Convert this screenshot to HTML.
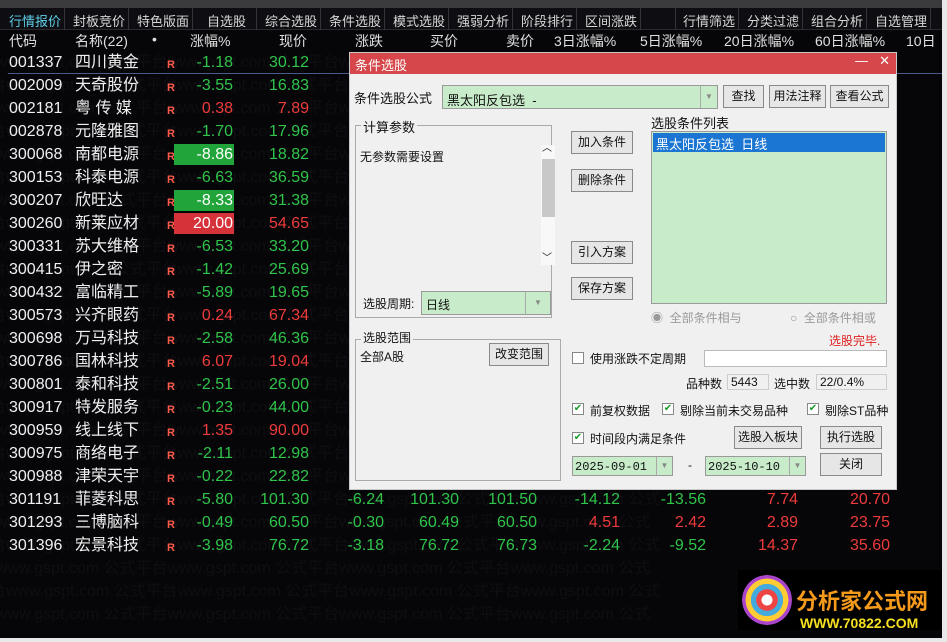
<!DOCTYPE html><html><head><meta charset="utf-8"><style>
*{margin:0;padding:0;box-sizing:border-box}
html{width:947px;height:642px;overflow:hidden}
body{width:947px;height:642px;background:#060609;overflow:hidden;position:relative;font-family:"Liberation Sans","Noto Sans CJK SC",sans-serif;color:#e8e8e8}
.a{position:absolute;white-space:nowrap}
.top{left:0;top:0;width:947px;height:8px;background:#3b3b3d}
.tabs{left:0;top:8px;width:942px;height:22px;background:#0d0d12;border-bottom:1px solid #2a2a30}
.tab{position:absolute;top:3px;font-size:13px;color:#d8d8d8}
.sep{position:absolute;top:0;width:1px;height:22px;background:#33333a}
.hd{font-size:14px;color:#e0e0e0;top:31px}
.row{font-size:16px;line-height:22px;height:22px}
.g{color:#2fc44a}.r{color:#ee3b3b}.w{color:#f0f0f0}
.R{font-size:11px;color:#ff5a4a;font-weight:bold}
.wm{color:#0f0f13;font-size:16px;left:0}
.dlg{left:349px;top:52px;width:548px;height:438px;background:#f0f0f0;border:1px solid #c9c9c9}
.tt{left:0;top:0;width:546px;height:21px;background:#d5474a;color:#fff;font-size:13px;padding:2px 5px}
.btn{position:absolute;background:#e6e6e6;border:1px solid #8a8a8a;font-size:12px;color:#111;text-align:center;line-height:20px;height:23px}
.t{position:absolute;font-size:12px;color:#111;white-space:nowrap}
.grn{position:absolute;background:#c8ecca;border:1px solid #9a9a9a}
.cb{position:absolute;width:12px;height:12px;border:1px solid #888;background:#fff;font-size:10px;color:#1a9a2a;line-height:10px;text-align:center}
.dd{position:absolute;right:0;top:0;bottom:0;width:17px;border-left:1px solid #aaa;color:#888;font-size:8px;text-align:center}
</style></head><body>
<div class="a top"></div>
<div class="a tabs">
<span class="tab" style="left:9px;color:#5fd0e8">行情报价</span><div class="sep" style="left:64px"></div>
<span class="tab" style="left:73px">封板竞价</span><div class="sep" style="left:128px"></div>
<span class="tab" style="left:137px">特色版面</span><div class="sep" style="left:192px"></div>
<span class="tab" style="left:207px">自选股</span><div class="sep" style="left:256px"></div>
<span class="tab" style="left:265px">综合选股</span><div class="sep" style="left:320px"></div>
<span class="tab" style="left:329px">条件选股</span><div class="sep" style="left:384px"></div>
<span class="tab" style="left:393px">模式选股</span><div class="sep" style="left:448px"></div>
<span class="tab" style="left:457px">强弱分析</span><div class="sep" style="left:512px"></div>
<span class="tab" style="left:521px">阶段排行</span><div class="sep" style="left:576px"></div>
<span class="tab" style="left:585px">区间涨跌</span><div class="sep" style="left:640px"></div><div class="sep" style="left:675px"></div>
<span class="tab" style="left:683px">行情筛选</span><div class="sep" style="left:738px"></div>
<span class="tab" style="left:747px">分类过滤</span><div class="sep" style="left:802px"></div>
<span class="tab" style="left:811px">组合分析</span><div class="sep" style="left:866px"></div>
<span class="tab" style="left:875px">自选管理</span><div class="sep" style="left:930px"></div>
</div>
<div class="a" style="left:942px;top:0;width:5px;height:642px;background:#e8e8e8"></div>
<div class="a hd" style="left:9px">代码</div><div class="a hd" style="left:75px">名称(22)</div><div class="a hd" style="left:152px">•</div>
<div class="a hd" style="left:190px">涨幅%</div><div class="a hd" style="left:279px">现价</div><div class="a hd" style="left:355px">涨跌</div>
<div class="a hd" style="left:430px">买价</div><div class="a hd" style="left:506px">卖价</div><div class="a hd" style="left:554px">3日涨幅%</div>
<div class="a hd" style="left:640px">5日涨幅%</div><div class="a hd" style="left:724px">20日涨幅%</div><div class="a hd" style="left:815px">60日涨幅%</div><div class="a hd" style="left:906px">10日</div>
<div class="a" style="left:8px;top:73px;width:934px;height:1px;background:#4a5a8a"></div>
<div id="wm"></div>
<div id="rows"></div>
<div class="a dlg">
<div class="a tt">条件选股<span style="position:absolute;right:28px;top:0">—</span><span style="position:absolute;right:6px;top:0">✕</span></div>
<div class="t" style="left:4px;top:35px;font-size:13px">条件选股公式</div>
<div class="grn" style="left:92px;top:32px;width:276px;height:24px"><span class="t" style="left:4px;top:4px;font-size:13px">黑太阳反包选 &nbsp;-</span><div class="dd" style="line-height:22px">▼</div></div>
<div class="btn" style="left:373px;top:32px;width:41px">查找</div>
<div class="btn" style="left:419px;top:32px;width:57px">用法注释</div>
<div class="btn" style="left:480px;top:32px;width:59px">查看公式</div>
<div class="a" style="left:5px;top:72px;width:197px;height:193px;border:1px solid #aaa"></div>
<div class="t" style="left:11px;top:64px;background:#f0f0f0;padding:0 2px;font-size:13px">计算参数</div>
<div class="t" style="left:10px;top:95px">无参数需要设置</div>
<div class="a" style="left:191px;top:92px;width:14px;height:120px;background:#f8f8f8"></div>
<div class="a" style="left:192px;top:106px;width:13px;height:58px;background:#c8c8c8"></div>
<div class="t" style="left:192px;top:86px;font-size:10px">︿</div><div class="t" style="left:192px;top:196px;font-size:10px">﹀</div>
<div class="t" style="left:13px;top:242px">选股周期:</div>
<div class="grn" style="left:71px;top:238px;width:130px;height:24px;background:#c8ecca"><span class="t" style="left:4px;top:4px">日线</span><div class="dd" style="line-height:22px;width:25px">▼</div></div>
<div class="btn" style="left:221px;top:78px;width:62px">加入条件</div>
<div class="btn" style="left:221px;top:116px;width:62px">删除条件</div>
<div class="btn" style="left:221px;top:188px;width:62px">引入方案</div>
<div class="btn" style="left:221px;top:224px;width:62px">保存方案</div>
<div class="t" style="left:301px;top:60px;font-size:13px">选股条件列表</div>
<div class="grn" style="left:301px;top:78px;width:236px;height:173px"><div class="a" style="left:1px;top:1px;width:232px;height:19px;background:#1a76d2;color:#fff;font-size:13px;padding:1px 3px">黑太阳反包选 &nbsp;日线</div></div>
<div class="t" style="left:301px;top:256px;color:#999">◉ &nbsp;全部条件相与</div>
<div class="t" style="left:440px;top:256px;color:#999">○ &nbsp;全部条件相或</div>
<div class="a" style="left:5px;top:286px;width:206px;height:142px;border:1px solid #aaa"></div>
<div class="t" style="left:11px;top:276px;background:#f0f0f0;padding:0 2px">选股范围</div>
<div class="t" style="left:10px;top:295px">全部A股</div>
<div class="btn" style="left:139px;top:290px;width:60px">改变范围</div>
<div class="t" style="left:479px;top:279px;color:#e02020">选股完毕.</div>
<div class="cb" style="left:222px;top:299px"></div><div class="t" style="left:240px;top:297px">使用涨跌不定周期</div>
<div class="a" style="left:354px;top:297px;width:183px;height:17px;background:#fff;border:1px solid #bbb"></div>
<div class="t" style="left:336px;top:322px">品种数</div><div class="a" style="left:377px;top:321px;width:42px;height:16px;border:1px solid #ccc;font-size:12px;padding-left:3px;color:#111">5443</div>
<div class="t" style="left:424px;top:322px">选中数</div><div class="a" style="left:466px;top:321px;width:71px;height:16px;border:1px solid #ccc;font-size:12px;padding-left:3px;color:#111">22/0.4%</div>
<div class="cb" style="left:222px;top:350px">✔</div><div class="t" style="left:240px;top:349px">前复权数据</div>
<div class="cb" style="left:312px;top:350px">✔</div><div class="t" style="left:330px;top:349px">剔除当前未交易品种</div>
<div class="cb" style="left:457px;top:350px">✔</div><div class="t" style="left:475px;top:349px">剔除ST品种</div>
<div class="cb" style="left:222px;top:379px">✔</div><div class="t" style="left:240px;top:377px">时间段内满足条件</div>
<div class="btn" style="left:384px;top:373px;width:68px">选股入板块</div>
<div class="btn" style="left:470px;top:373px;width:62px">执行选股</div>
<div class="grn" style="left:222px;top:403px;width:101px;height:20px"><span class="t" style="left:2px;top:3px;font-family:'Liberation Mono',monospace">2025-09-01</span><div class="dd" style="line-height:18px;width:16px">▼</div></div>
<div class="t" style="left:338px;top:405px">-</div>
<div class="grn" style="left:355px;top:403px;width:101px;height:20px"><span class="t" style="left:2px;top:3px;font-family:'Liberation Mono',monospace">2025-10-10</span><div class="dd" style="line-height:18px;width:16px">▼</div></div>
<div class="btn" style="left:470px;top:400px;width:62px">关闭</div>
</div>
<div class="a" style="left:738px;top:570px;width:204px;height:60px;background:#000"></div>
<div class="a" style="left:742px;top:575px;width:50px;height:50px;border-radius:50%;background:radial-gradient(circle,#fff 0 15%,#e44 16% 30%,#4ad 31% 45%,#fc3 46% 60%,#a4c 61% 70%,transparent 71%)"></div>
<div class="a" style="left:796px;top:584px;font-size:22px;font-weight:bold;color:#f59a1a">分析家公式网</div>
<div class="a" style="left:800px;top:615px;font-size:14px;font-weight:bold;color:#f5e020">WWW.70822.COM</div>
<div class="a" style="left:0;top:638px;width:947px;height:4px;background:#e8e8e8"></div>
<script>
var D=[["001337","四川黄金",-1.18,"30.12"],["002009","天奇股份",-3.55,"16.83"],["002181","粤 传 媒",0.38,"7.89"],["002878","元隆雅图",-1.70,"17.96"],["300068","南都电源",-8.86,"18.82"],["300153","科泰电源",-6.63,"36.59"],["300207","欣旺达",-8.33,"31.38"],["300260","新莱应材",20.00,"54.65"],["300331","苏大维格",-6.53,"33.20"],["300415","伊之密",-1.42,"25.69"],["300432","富临精工",-5.89,"19.65"],["300573","兴齐眼药",0.24,"67.34"],["300698","万马科技",-2.58,"46.36"],["300786","国林科技",6.07,"19.04"],["300801","泰和科技",-2.51,"26.00"],["300917","特发服务",-0.23,"44.00"],["300959","线上线下",1.35,"90.00"],["300975","商络电子",-2.11,"12.98"],["300988","津荣天宇",-0.22,"22.82"],["301191","菲菱科思",-5.80,"101.30"],["301293","三博脑科",-0.49,"60.50"],["301396","宏景科技",-3.98,"76.72"]];
var X=[["-6.24","101.30","101.50","-14.12","-13.56","7.74","20.70"],["-0.30","60.49","60.50","4.51","2.42","2.89","23.75"],["-3.18","76.72","76.73","-2.24","-9.52","14.37","35.60"]];
var h="",w="";
for(var k=0;k<25;k++){w+='<div class="a wm" style="top:'+(48+k*23)+'px;left:'+(-20+(k%2)*10)+'px">'+'台www.gspt.com 公式平台www.gspt.com 公式平台www.gspt.com 公式平台www.gspt.com 公式'+'</div>';}
document.getElementById('wm').innerHTML=w;
D.forEach(function(d,i){var y=52+i*23;var c=d[2]<0?"g":"r";var v=d[2].toFixed(2);
h+='<div class="a row w" style="left:9px;top:'+y+'px">'+d[0]+'</div><div class="a row w" style="left:75px;top:'+y+'px">'+d[1]+'</div><div class="a R" style="left:167px;top:'+(y+7)+'px">R</div>';
var bg="";if(i==4||i==6)bg="background:#21a53b;color:#fff;";if(i==7)bg="background:#d6323a;color:#fff;";
h+='<div class="a row '+c+'" style="'+bg+'left:174px;width:60px;text-align:right;padding-right:1px;top:'+y+'px;height:21px">'+v+'</div>';
h+='<div class="a row '+c+'" style="left:250px;width:59px;text-align:right;top:'+y+'px">'+d[3]+'</div>';
if(i>=19){var e=X[i-19],R=[384,459,537,620,706,798,890];e.forEach(function(s,j){var cc=(s.charAt(0)=="-")?"g":((j==1||j==2)?"g":"r");h+='<div class="a row '+cc+'" style="left:'+(R[j]-70)+'px;width:70px;text-align:right;top:'+y+'px">'+s+'</div>';});}
});
document.getElementById('rows').innerHTML=h;
</script>
</body></html>
